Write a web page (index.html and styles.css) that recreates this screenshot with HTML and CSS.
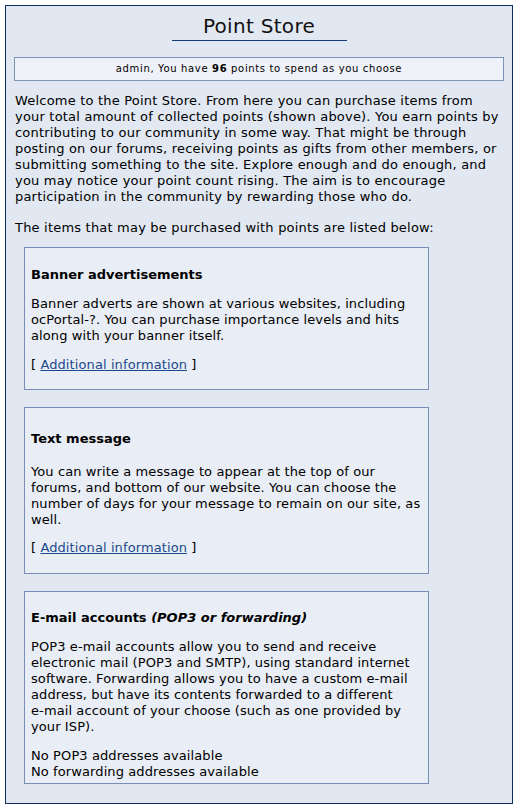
FILE: index.html
```html
<!DOCTYPE html>
<html>
<head>
<meta charset="utf-8">
<title>Point Store</title>
<link rel="stylesheet" href="styles.css">
</head>
<body>
<div class="store">
  <h1 class="title"><span>Point Store</span></h1>
  <div class="notice">admin, You have <b>96</b> points to spend as you choose</div>
  <p class="intro">Welcome to the Point Store. From here you can purchase items from your total amount of collected points (shown above). You earn points by contributing to our community in some way. That might be through posting on our forums, receiving points as gifts from other members, or submitting something to the site. Explore enough and do enough, and you may notice your point count rising. The aim is to encourage participation in the community by rewarding those who do.</p>
  <p class="intro">The items that may be purchased with points are listed below:</p>
  <div class="items">
    <div class="item">
      <h3>Banner advertisements</h3>
      <p>Banner adverts are shown at various websites, including ocPortal-?. You can purchase importance levels and hits along with your banner itself.</p>
      <p class="more">[ <a href="#">Additional information</a> ]</p>
    </div>
    <div class="item item-roomy">
      <h3>Text message</h3>
      <p>You can write a message to appear at the top of our forums, and bottom of our website. You can choose the number of days for your message to remain on our site, as well.</p>
      <p class="more">[ <a href="#">Additional information</a> ]</p>
    </div>
    <div class="item item-last">
      <h3>E-mail accounts <em>(POP3 or forwarding)</em></h3>
      <p>POP3 e&#8209;mail accounts allow you to send and receive electronic mail (POP3 and SMTP), using standard internet software. Forwarding allows you to have a custom e&#8209;mail address, but have its contents forwarded to a different e&#8209;mail account of your choose (such as one provided by your ISP).</p>
      <p class="status">No POP3 addresses available<br>No forwarding addresses available</p>
    </div>
  </div>
</div>
</body>
</html>
```
FILE: styles.css
```css
html, body {
  margin: 0;
  padding: 0;
  background: #ffffff;
}
body {
  padding: 5px 5px 2px 5px;
  font-family: "DejaVu Sans", Verdana, sans-serif;
  font-size: 13px;
  line-height: 16px;
  letter-spacing: 0.2px;
  color: #000;
}
.store {
  border: 1px solid #102a62;
  background: #e1e8f2;
  padding: 8px 8px 19px 8px;
}
.title {
  margin: 0;
  text-align: center;
  font-size: 20px;
  line-height: 24px;
  font-weight: normal;
  letter-spacing: 0.3px;
  color: #111;
}
.title span {
  display: inline-block;
  width: 175px;
  padding-bottom: 2px;
  border-bottom: 1px solid #17397a;
}
.notice {
  margin: 16px 0 12px 0;
  border: 1px solid #8093b8;
  background: #eef1f8;
  text-align: center;
  font-size: 10px;
  line-height: 12px;
  letter-spacing: 0.65px;
  padding: 5px 4px;
}
.intro {
  margin: 0 0 11px 0;
  padding-left: 1px;
}
.intro + .intro {
  margin-top: 15px;
}
.items {
  margin-left: 10px;
  width: 405px;
  display: flex;
  flex-direction: column;
  gap: 17px;
}
.item {
  border: 1px solid #7a8db5;
  background: #e9edf5;
  padding: 6px 4px 6px 6px;
  letter-spacing: 0.1px;
}
.item h3 {
  margin: 13px 0 13px 0;
  font-size: 13px;
  line-height: 16px;
  font-weight: bold;
  letter-spacing: 0;
}
.item p {
  margin: 0 0 13px 0;
}
.item p.more {
  margin-bottom: 10px;
}
.item-roomy h3 {
  margin-top: 17px;
  margin-bottom: 17px;
}
.item-roomy p {
  margin-bottom: 12px;
}
.item-roomy p.more {
  margin-bottom: 11px;
}
.item-last {
  padding-bottom: 3px;
}
.item-last h3 {
  margin-top: 12px;
}
.item p.status {
  margin-bottom: 0;
}
.item a {
  color: #1b4a8c;
  text-decoration: underline;
}
```
